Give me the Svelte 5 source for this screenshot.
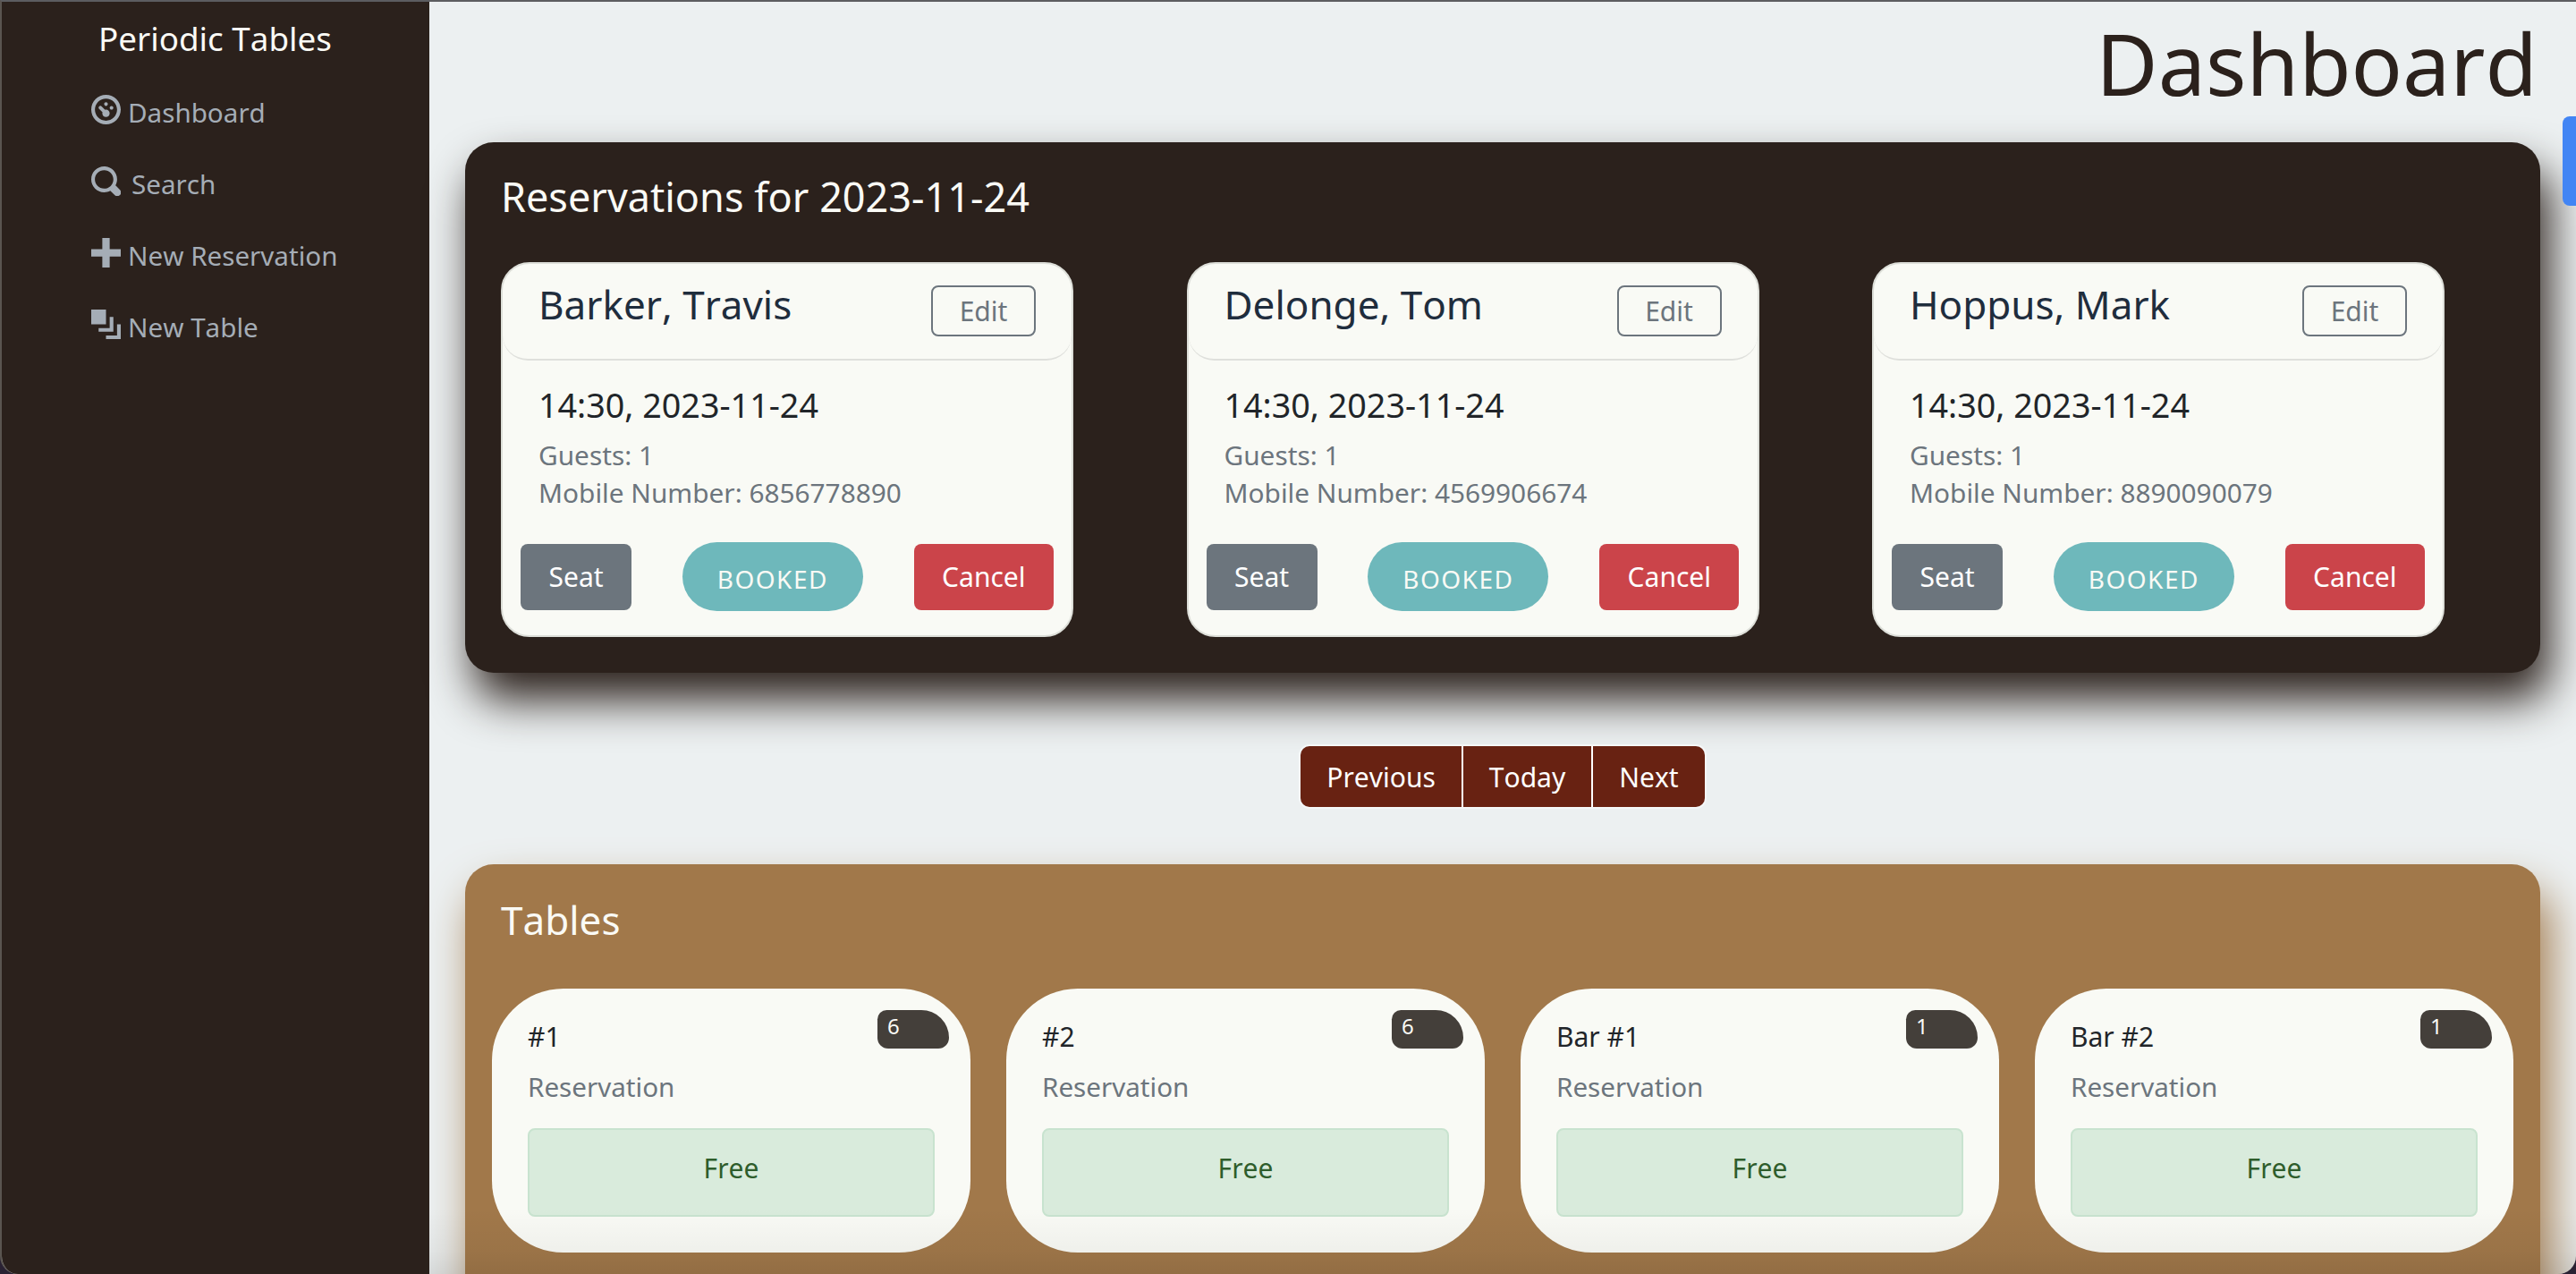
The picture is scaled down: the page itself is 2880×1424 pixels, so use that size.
<script>
  const reservations = [
    { name: "Barker, Travis", mobile: "6856778890" },
    { name: "Delonge, Tom", mobile: "4569906674" },
    { name: "Hoppus, Mark", mobile: "8890090079" },
  ];
  const tables = [
    { name: "#1", capacity: 6 },
    { name: "#2", capacity: 6 },
    { name: "Bar #1", capacity: 1 },
    { name: "Bar #2", capacity: 1 },
  ];
  const date = "2023-11-24";
</script>

<div class="page">
  <nav class="sidebar">
    <div class="brand">Periodic Tables</div>
    <ul class="nav">
      <li>
        <svg viewBox="0 0 8 8"><path d="M4 0c-2.2 0-4 1.8-4 4s1.8 4 4 4 4-1.8 4-4-1.8-4-4-4zm0 1c1.66 0 3 1.34 3 3s-1.34 3-3 3-3-1.34-3-3 1.34-3 3-3zm0 1c-.28 0-.5.22-.5.5s.22.5.5.5.5-.22.5-.5-.22-.5-.5-.5zm-1.66 1a.5.5 0 0 0-.19.84l.91.91c-.02.08-.06.16-.06.25 0 .55.45 1 1 1s1-.45 1-1-.45-1-1-1c-.09 0-.17.04-.25.06l-.91-.91a.5.5 0 0 0-.44-.16.5.5 0 0 0-.06 0zm3.16 0c-.28 0-.5.22-.5.5s.22.5.5.5.5-.22.5-.5-.22-.5-.5-.5z" /></svg>
        <span>Dashboard</span>
      </li>
      <li>
        <svg viewBox="0 0 8 8"><path d="M3.5 0c-1.93 0-3.5 1.57-3.5 3.5s1.57 3.5 3.5 3.5c.59 0 1.17-.14 1.66-.41a1 1 0 0 0 .13.13l1 1a1.02 1.02 0 1 0 1.44-1.44l-1-1a1 1 0 0 0-.16-.13c.27-.49.44-1.06.44-1.66 0-1.93-1.57-3.5-3.5-3.5zm0 1c1.39 0 2.5 1.11 2.5 2.5 0 .66-.24 1.27-.66 1.72-.01.01-.02.02-.03.03a1 1 0 0 0-.13.13c-.44.4-1.04.63-1.69.63-1.39 0-2.5-1.11-2.5-2.5s1.11-2.5 2.5-2.5z" /></svg>
        <span class="search">Search</span>
      </li>
      <li>
        <svg viewBox="0 0 8 8"><path d="M3 0v3h-3v2h3v3h2v-3h3v-2h-3v-3h-2z" /></svg>
        <span>New Reservation</span>
      </li>
      <li>
        <svg viewBox="0 0 8 8"><path d="M0 0v4h4v-4h-4zm5 2v3h-3v1h4v-4h-1zm2 2v3h-3v1h4v-4h-1z" /></svg>
        <span>New Table</span>
      </li>
    </ul>
  </nav>

  <main class="main">
    <h1 class="title">Dashboard</h1>

    <section class="panel reservations">
      <h2 class="panel-title">Reservations for {date}</h2>
      <div class="res-row">
        {#each reservations as r}
          <div class="res-card">
            <div class="res-header">
              <span class="res-name">{r.name}</span>
              <button class="btn-edit">Edit</button>
            </div>
            <div class="res-body">
              <div class="res-time">14:30, {date}</div>
              <div class="res-meta">Guests: 1</div>
              <div class="res-meta">Mobile Number: {r.mobile}</div>
            </div>
            <div class="res-footer">
              <button class="btn seat">Seat</button>
              <span class="pill">BOOKED</span>
              <button class="btn cancel">Cancel</button>
            </div>
          </div>
        {/each}
      </div>
    </section>

    <div class="pager">
      <button>Previous</button>
      <button>Today</button>
      <button>Next</button>
    </div>

    <section class="panel tables">
      <h2 class="panel-title tables-title">Tables</h2>
      <div class="table-row">
        {#each tables as t}
          <div class="table-card">
            <span class="badge">{t.capacity}</span>
            <div class="table-name">{t.name}</div>
            <div class="table-res">Reservation</div>
            <div class="free">Free</div>
          </div>
        {/each}
      </div>
    </section>
  </main>

  <div class="grip"></div>
  <div class="fade"></div>
</div>

<style>
  :global(body) {
    margin: 0;
    background: #2a2233;
    font-family: "Noto Sans", "Open Sans", sans-serif;
    font-kerning: none;
  }

  .page {
    position: relative;
    display: flex;
    height: 1424px;
    overflow: hidden;
    box-sizing: border-box;
    background: #ecf0f1;
    border-top: 2px solid #5c5d60;
    border-left: 2px solid #5a5550;
    border-radius: 0 0 20px 20px;
  }

  .sidebar {
    width: 478px;
    flex: none;
    box-sizing: border-box;
    background: #2b211c;
  }

  .brand {
    margin-top: 19px;
    padding-left: 108px;
    font-size: 36.8px;
    line-height: 44px;
    color: #fafaf5;
  }

  .nav {
    list-style: none;
    margin: 20px 0 0;
    padding: 0 0 0 100px;
  }

  .nav li {
    display: flex;
    align-items: center;
    height: 80px;
    font-size: 29.6px;
    color: #a5adb6;
  }

  .nav svg {
    width: 33px;
    height: 33px;
    fill: currentColor;
    margin-right: 8px;
    margin-top: -5px;
  }

  .nav .search {
    margin-left: 4px;
  }

  .main {
    flex: 1;
    min-width: 0;
    padding: 0 40px;
  }

  .title {
    margin: 0;
    height: 157px;
    padding-right: 3px;
    text-align: right;
    font-size: 95px;
    font-weight: 400;
    line-height: 136px;
    color: #2b211c;
  }

  .panel {
    border-radius: 32px;
  }

  .panel-title {
    margin: 0;
    font-weight: 400;
    font-size: 45px;
    line-height: 60px;
    color: #fafaf5;
  }

  .reservations {
    height: 593px;
    box-sizing: border-box;
    padding: 31px 40px 40px;
    background: #2b211c;
    box-shadow: 10px 30px 50px #2b211c;
  }

  .res-row {
    display: flex;
    gap: 126.5px;
    margin-top: 43px;
  }

  .res-card {
    width: 640px;
    height: 419px;
    box-sizing: border-box;
    background: #f9faf5;
    border: 2px solid #dddfd9;
    border-radius: 32px;
  }

  .res-header {
    display: flex;
    justify-content: space-between;
    height: 108px;
    box-sizing: border-box;
    padding: 20px 40px 0;
    border-bottom: 2px solid #dfe0dc;
    border-radius: 0 0 28px 28px;
  }

  .res-name {
    font-size: 44px;
    line-height: 50px;
    color: #1f2d3d;
  }

  .btn-edit {
    width: 117px;
    height: 57px;
    box-sizing: border-box;
    margin-top: 4px;
    padding: 0;
    background: none;
    border: 2px solid #6c757d;
    border-radius: 8px;
    font: inherit;
    font-size: 30px;
    color: #6c757d;
  }

  .res-body {
    padding: 25px 40px 0;
  }

  .res-time {
    margin-bottom: 10px;
    font-size: 37.7px;
    line-height: 50px;
    color: #212529;
  }

  .res-meta {
    font-size: 29.8px;
    line-height: 42px;
    color: #6c757d;
  }

  .res-footer {
    display: flex;
    align-items: center;
    justify-content: space-between;
    margin-top: 34px;
    padding: 0 20px;
  }

  .btn {
    height: 74px;
    padding: 0 31.5px;
    border: 0;
    border-radius: 8px;
    font: inherit;
    font-size: 30px;
    color: #fff;
  }

  .seat {
    background: #6c757d;
  }

  .cancel {
    background: #cb444a;
  }

  .pill {
    width: 202px;
    height: 77px;
    border-radius: 40px;
    background: #6eb8bb;
    color: #fafaf5;
    font-size: 28px;
    letter-spacing: 1.5px;
    line-height: 82px;
    text-align: center;
  }

  .pager {
    display: flex;
    width: fit-content;
    margin: 80px auto 0;
    height: 72px;
    box-sizing: border-box;
    border: 2px solid #f5f7f8;
    border-radius: 12px;
    overflow: hidden;
  }

  .pager button {
    padding: 0 29px;
    background: #682212;
    border: 0;
    border-left: 2px solid #fff;
    font: inherit;
    font-size: 30px;
    color: #fff;
  }

  .pager button:first-child {
    border-left: 0;
  }

  .tables {
    margin-top: 62px;
    height: 600px;
    box-sizing: border-box;
    padding: 29px 40px;
    background: #a1784a;
    box-shadow: 10px 30px 50px #a1784a;
  }

  .tables-title {
    font-size: 44px;
    line-height: 66px;
  }

  .table-row {
    display: flex;
    gap: 40px;
    margin: 44px -10px 0;
  }

  .table-card {
    position: relative;
    width: 535px;
    height: 295px;
    flex: none;
    box-sizing: border-box;
    padding: 33px 40px 0;
    background: #f9faf5;
    border-radius: 80px;
  }

  .badge {
    position: absolute;
    top: 24px;
    right: 24px;
    width: 80px;
    height: 43px;
    box-sizing: border-box;
    padding: 3px 0 0 11px;
    background: #443f3a;
    border-radius: 12px 36px 14px 14px;
    color: #fafaf5;
    font-size: 24px;
    line-height: 30px;
  }

  .table-name {
    font-size: 30px;
    line-height: 42px;
    color: #212529;
  }

  .table-res {
    margin-top: 14px;
    font-size: 29.6px;
    line-height: 42px;
    color: #6c757d;
  }

  .free {
    margin-top: 25px;
    height: 99px;
    box-sizing: border-box;
    border: 2px solid #c8e3cf;
    border-radius: 8px;
    background: #d9ebdc;
    color: #2e5d2c;
    font-size: 30px;
    line-height: 86px;
    text-align: center;
  }

  .grip {
    position: absolute;
    top: 128px;
    right: 0;
    width: 15px;
    height: 100px;
    background: #4285f4;
    border-radius: 8px 0 0 8px;
  }

  .fade {
    position: absolute;
    left: 478px;
    right: 0;
    bottom: 0;
    height: 74px;
    background: linear-gradient(rgba(0, 0, 0, 0), rgba(0, 0, 0, 0.04) 65%, rgba(0, 0, 0, 0.09));
    pointer-events: none;
  }
</style>
